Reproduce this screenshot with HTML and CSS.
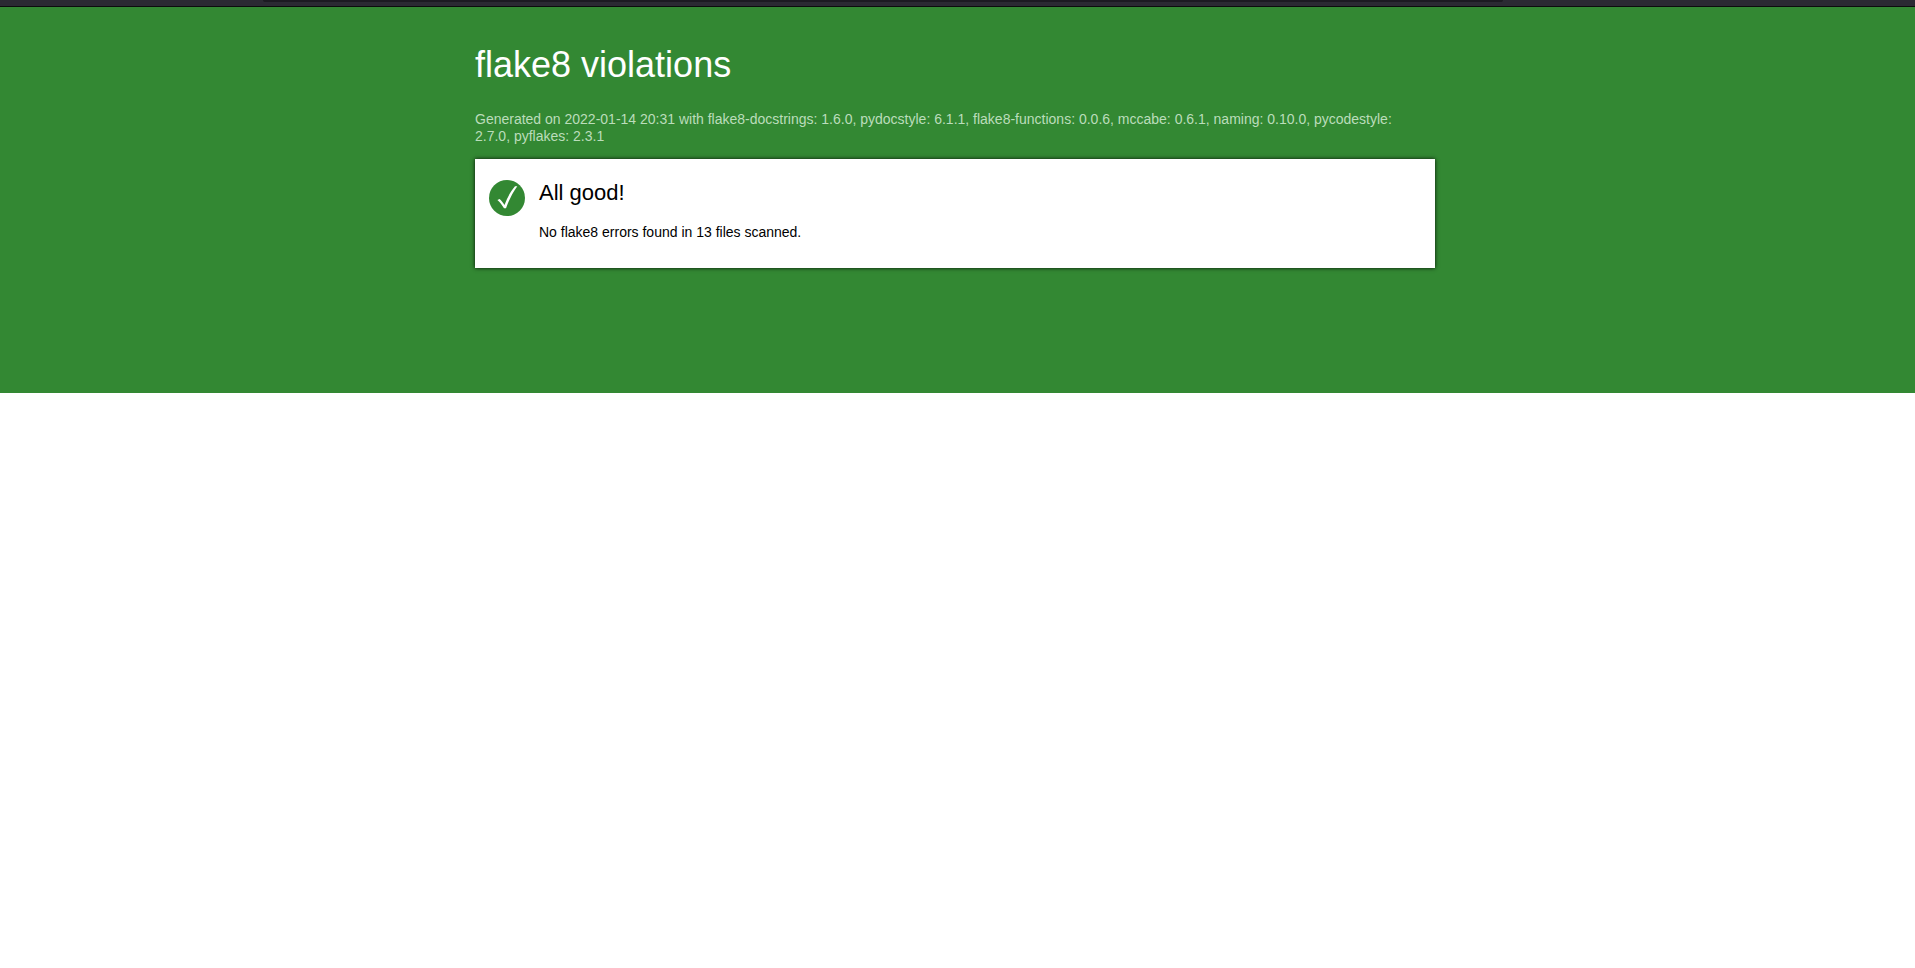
FILE: index.html
```html
<!DOCTYPE html>
<html lang="en">
<head>
<meta charset="utf-8">
<title>flake8 violations</title>
<link rel="stylesheet" href="styles.css">
</head>
<body>
<div class="toolbar"><div class="toolbar-field"></div></div>
<main class="banner">
  <div class="doc">
    <h1 class="title">flake8 violations</h1>
    <p class="versions">Generated on 2022-01-14 20:31 with flake8-docstrings: 1.6.0, pydocstyle: 6.1.1, flake8-functions: 0.0.6, mccabe: 0.6.1, naming: 0.10.0, pycodestyle: 2.7.0, pyflakes: 2.3.1</p>
    <section class="card">
      <svg class="tick" viewBox="0 0 36 36" aria-hidden="true">
        <circle cx="18" cy="18" r="18" fill="#338833"/>
        <path d="M8.400 20L10.600 19C12.500 20.500 14 22.500 15.500 25C18 18 21.500 11.500 26 6.200L28.300 6.200C23.500 12.800 20 20 17 28.300L15 28.300C13 25 11 22.300 8.400 20Z" fill="#fff"/>
      </svg>
      <div>
        <h2 class="status">All good!</h2>
        <p class="summary">No flake8 errors found in 13 files scanned.</p>
      </div>
    </section>
  </div>
</main>
</body>
</html>
```
FILE: styles.css
```css
body {
  margin: 0;
  background: #fff;
  color: #000;
  font: 14px/17px "Liberation Sans", Arial, sans-serif;
}
.toolbar {
  box-sizing: border-box;
  height: 7px;
  padding: 0 412px 0 263px;
  border-bottom: 1px solid #0c0c0d;
  background: #2b2a33;
}
.toolbar-field {
  height: 2px;
  border-radius: 0 0 4px 4px;
  background: #1c1b22;
}
.banner {
  box-sizing: border-box;
  min-height: 386px;
  padding: 36px 5px 0 0;
  background: #338833;
}
.doc {
  max-width: 960px;
  margin: 0 auto;
}
.title {
  margin: 0 0 25px;
  color: #fff;
  font-size: 36px;
  font-weight: 400;
  line-height: 43px;
}
.versions {
  margin: 0 0 14px;
  padding-right: 16px;
  color: #bbddbb;
}
.card {
  display: flex;
  gap: 14px;
  padding: 21px 14px 27px;
  background: #fff;
  box-shadow: 0 0 4px rgba(0, 0, 0, 0.9);
}
.tick {
  flex: none;
  width: 36px;
  height: 36px;
}
.status {
  margin: 0 0 18px;
  font-size: 22px;
  font-weight: 400;
  line-height: 26px;
}
.summary {
  margin: 0;
}
```
